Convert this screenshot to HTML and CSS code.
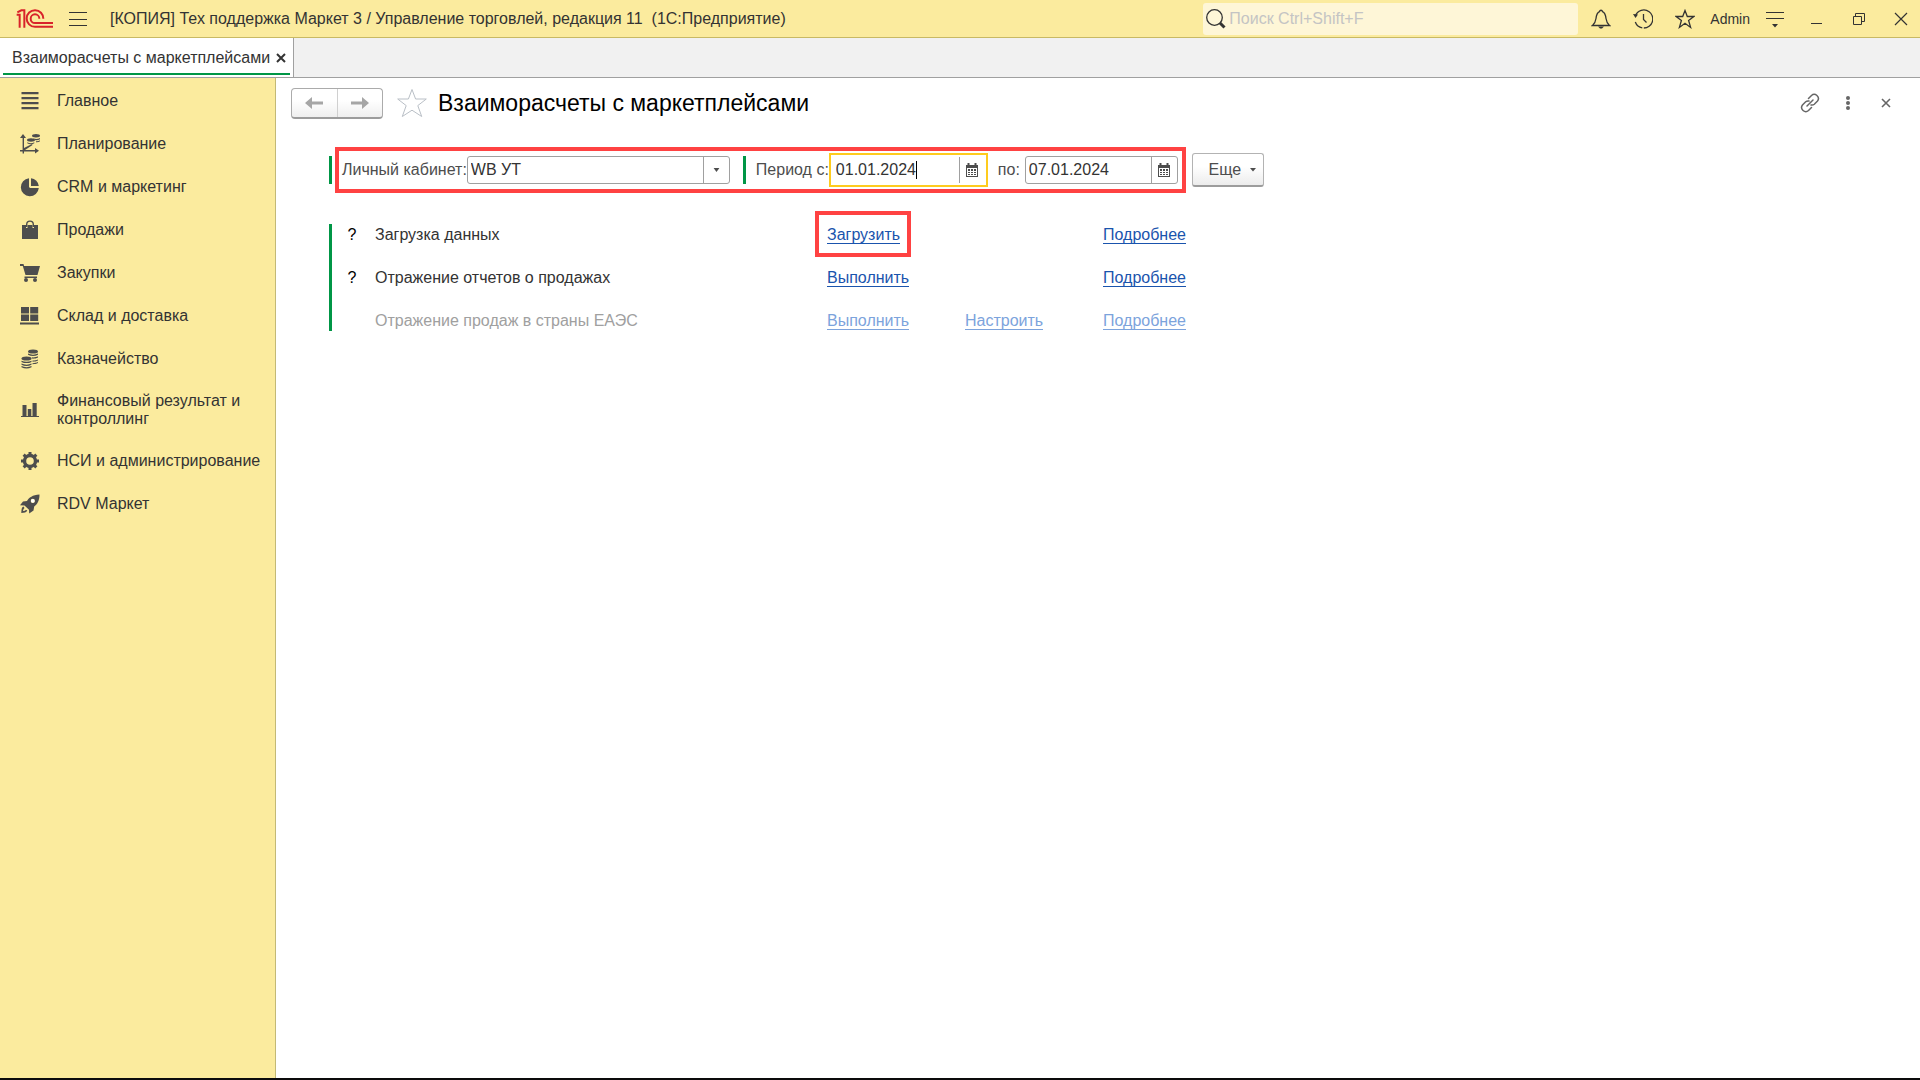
FILE: index.html
```html
<!DOCTYPE html>
<html lang="ru">
<head>
    <meta charset="UTF-8">
    <meta name="viewport" content="width=device-width, initial-scale=1.0">
    <title>Взаиморасчеты с маркетплейсами</title>
    <link rel="stylesheet" href="styles.css">
</head>
<body>

    <header class="titlebar">
        <svg class="logo" viewBox="47 25 111 57" fill="none" stroke="#d8232a" stroke-width="6">
            <path d="M49 42h9v39M51 35l12-6h9v52"/>
            <path d="M129 54a25 25 0 1 0-25 24.500h54M117 54a13 13 0 1 0-13 13h54"/>
        </svg>
        <button class="menu-button" type="button" aria-label="Меню">
            <svg width="18" height="16" viewBox="0 0 18 16" stroke="#333" stroke-width="1"><path d="M0 1.500h18M0 8.500h18M0 14.500h18"/></svg>
        </button>
        <h1 class="app-title">[КОПИЯ] Тех поддержка Маркет 3 / Управление торговлей, редакция 11&nbsp; (1С:Предприятие)</h1>
        <div class="search">
            <svg width="20" height="20" viewBox="0 0 20 20" fill="none" stroke="#333"><circle cx="8.500" cy="8.500" r="7.800" stroke-width="1.300"/><path d="M14 14l4.500 4.500" stroke-width="3"/></svg>
            <input type="text" placeholder="Поиск Ctrl+Shift+F" aria-label="Поиск">
        </div>
        <div class="window-tools">
            <button type="button" aria-label="Уведомления">
                <svg width="20" height="20" viewBox="0 0 20 20" fill="none" stroke="#333" stroke-width="1.300"><path d="M1.500 16.500c2.500-2 3-3.500 3.500-7C5.400 5.500 6.500 3.500 8.500 2.600 8.800.8 11.200.8 11.500 2.600c2 .9 3.100 2.900 3.500 6.900.5 3.500 1 5 3.500 7z"/><path d="M7 17.500h6l-2 2H9z" fill="#333" stroke="none"/></svg>
            </button>
            <button type="button" aria-label="История">
                <svg width="20" height="20" viewBox="0 0 20 20" fill="none" stroke="#333" stroke-width="1.300"><path d="M2.300 7a9 9 0 1 1 0 6" stroke-dasharray="39 1.500"/><path d="M10.500 5v5.500l3 3"/><path d="M0 5l5 .5-2.500 3.500z" fill="#333" stroke="none"/></svg>
            </button>
            <button type="button" aria-label="Избранное">
                <svg width="20" height="20" viewBox="0 0 20 20" fill="none" stroke="#333" stroke-width="1.300"><path d="M10 1.500l2.300 6h6.600l-5.300 4 2 6.900L10 14.300l-5.600 4.100 2-6.900-5.300-4h6.600z"/></svg>
            </button>
            <a class="user" href="#">Admin</a>
            <button type="button" aria-label="Сервис и настройки">
                <svg width="18" height="18" viewBox="0 0 18 18" fill="#333"><path d="M0 2h18v1H0zM0 8h18v1H0zM6 14h6l-3 3.500z"/></svg>
            </button>
            <button type="button" aria-label="Свернуть">
                <svg width="12" height="12" viewBox="0 0 12 12" fill="#333"><path d="M0 10h11v1H0z"/></svg>
            </button>
            <button type="button" aria-label="Восстановить">
                <svg width="12" height="12" viewBox="0 0 12 12" fill="none" stroke="#333"><path d="M.5 3.500h8v8h-8zM2.500 3.500v-3h9v8h-3"/></svg>
            </button>
            <button type="button" aria-label="Закрыть">
                <svg width="14" height="14" viewBox="0 0 14 14" stroke="#333" stroke-width="1.200"><path d="M1 1l12 12M13 1L1 13"/></svg>
            </button>
        </div>
    </header>

    <div class="tabs">
        <div class="tab">
            <span>Взаиморасчеты с маркетплейсами</span>
            <button type="button" aria-label="Закрыть вкладку">
                <svg width="10" height="10" viewBox="0 0 10 10" stroke="#333" stroke-width="2"><path d="M1 1l8 8M9 1L1 9"/></svg>
            </button>
        </div>
    </div>

    <div class="workspace">
        <nav class="sidebar">
            <a href="#">
                <svg viewBox="0 0 20 20"><path d="M1.500 1h17v2.200h-17zM1.500 6h17v2.200h-17zM1.500 11h17v2.200h-17zM1.500 16h17v2.200h-17z"/></svg>
                Главное
            </a>
            <a href="#">
                <svg viewBox="0 0 20 20"><path d="M3 0l3 4H4v10l8-4 .5 1L5 16h10v-2l4 2.700-4 2.800V17.500H4v2H2.600v-2H0V16h2.600V4H0z"/><ellipse cx="11" cy="6" rx="4" ry="1.700"/><ellipse cx="16" cy="1.800" rx="4" ry="1.700"/><path d="M7.300 8.300c2 1.300 5 1.300 7 0v1c-2 1.300-5 1.300-7 0zM13 4.200c2 1 5 1 7-.2v1.200c-1.500 1-3 1.200-4.500 1zM16 7.300c1.500 0 3-.3 4-1v1c-1 .8-2.500 1.200-4 1z"/></svg>
                Планирование
            </a>
            <a href="#">
                <svg viewBox="0 0 20 20"><path d="M9 1.200V10l1 1h8.800A9 9 0 1 1 9 1.200z"/><path d="M11 1.200A8.500 8.500 0 0 1 18.800 9H11z"/></svg>
                CRM и маркетинг
            </a>
            <a href="#">
                <svg viewBox="0 0 20 20"><path d="M2 5h4v3h1.500V5h5v3H14V5h4v14H2z"/><path d="M6.700 7V4.500C6.700 0 13.300 0 13.300 4.500V7" fill="none" stroke="#4d4d4d" stroke-width="1.400"/></svg>
                Продажи
            </a>
            <a href="#">
                <svg viewBox="0 0 20 20"><path d="M0 1h3.500l.6 2H20l-2.500 9H5.500L2.800 3H0zM4.500 13.500H17V15H4.500z"/><circle cx="6" cy="17" r="2"/><circle cx="15" cy="17" r="2"/></svg>
                Закупки
            </a>
            <a href="#">
                <svg viewBox="0 0 20 20"><path d="M1 1h8v6.500H1zM10.200 1h8v6.500h-8zM1 8.500h8V15H1zM10.200 8.500h8V15h-8zM0 16.500h19v2H0z"/></svg>
                Склад и доставка
            </a>
            <a href="#">
                <svg viewBox="0 0 20 20"><ellipse cx="13" cy="2.500" rx="5" ry="2"/><ellipse cx="6.500" cy="9.500" rx="5" ry="2"/><path d="M8 4.600c3 1.500 7 1.500 10 0v1.200c-3 1.600-7 1.600-10 0zM11.500 8.300c2.500.3 5-.2 6.500-1v1.200c-1.500.8-3 1.200-5.500 1.200zM12.500 11.500c2.300 0 4-.3 5.500-1.100v1.200c-1.500.8-3.200 1.200-5.500 1.200zM12.500 14.200c2.300 0 4-.3 5.500-1.100v.9c-1.500.8-3.200 1.200-5.500 1.200zM1.500 11.700c3 1.500 7 1.500 10 0v1.200c-3 1.600-7 1.600-10 0zM1.500 14.500c3 1.500 7 1.500 10 0v1.200c-3 1.600-7 1.600-10 0zM1.500 17c3 1.500 7 1.500 10 0v1.200c-3 1.600-7 1.600-10 0z"/></svg>
                Казначейство
            </a>
            <a href="#">
                <svg viewBox="0 0 20 20"><path d="M2.500 5h4v11h1.300V9h3.500v7h1.200V3h4.200v13H19v1H1v-1h1.500z"/></svg>
                Финансовый результат и контроллинг
            </a>
            <a href="#">
                <svg viewBox="0 0 20 20"><circle cx="10" cy="10" r="5.500" fill="none" stroke="#4d4d4d" stroke-width="3.400"/><path d="M8.500 1h3v3h-3zM8.500 16h3v3h-3zM1 8.500h3v3H1zM16 8.500h3v3h-3zM2.600 4.700l2.100-2.100 2 2-2.100 2.100zM13.300 15.400l2.100-2.100 2 2-2.100 2.100zM15.300 2.600l2.100 2.100-2 2-2.100-2.100zM4.600 13.300l2.100 2.100-2 2-2.100-2.100z"/></svg>
                НСИ и администрирование
            </a>
            <a href="#">
                <svg viewBox="0 0 20 20"><path fill-rule="evenodd" d="M19.500.5c-7 .5-10.500 3-12.500 6.500L3 7.500 0 11.300l4.500.2 4.500 4.300.2 3.700 4.300-3 .7-4c3.300-2.500 5.300-6 5.300-12zM12.800 4.800a2.100 2.100 0 1 1 0 4.200 2.100 2.100 0 0 1 0-4.200z"/><circle cx="12.800" cy="6.900" r="1.800" fill="#fff"/><path d="M3.500 12.500C1.500 13.500 1.500 15.500 1.300 19c3-.2 5-.5 6-2.500l-1.500-.7c-.6 1-1.500 1.300-2.700 1.300.1-1.300.4-2.400 1.400-3.200z"/></svg>
                RDV Маркет
            </a>
        </nav>

        <main class="content">
            <div class="page-head">
                <div class="nav-buttons">
                    <button type="button" aria-label="Назад">
                        <svg width="18" height="12" viewBox="0 0 18 12" fill="#a6a6a6"><path d="M0 6l7-6v4.500h11v3H7V12z"/></svg>
                    </button>
                    <button type="button" aria-label="Вперед">
                        <svg width="18" height="12" viewBox="0 0 18 12" fill="#a6a6a6"><path d="M18 6l-7-6v4.500H0v3h11V12z"/></svg>
                    </button>
                </div>
                <button class="favorite" type="button" aria-label="Добавить в избранное">
                    <svg width="30" height="30" viewBox="0 0 30 30" fill="none" stroke="#b9bfc6" stroke-width="1"><path d="M15 1.500l3.600 9.500h10.700l-8.500 6.600 3.900 10.900L15 22.200l-9.700 6.300 3.900-10.900L.7 11h10.700z"/></svg>
                </button>
                <h2>Взаиморасчеты с маркетплейсами</h2>
                <div class="page-tools">
                    <button type="button" aria-label="Получить ссылку">
                        <svg width="20" height="20" viewBox="0 0 20 20" fill="none" stroke="#666" stroke-width="1.500" stroke-linecap="round"><path d="M8.500 5.500l3-3c3.500-3.200 9 1.500 6 5.500l-3.200 3.200c-1 .9-2.300 1-3.300.8M11.500 14.500l-3 3c-3.500 3.200-9-1.500-6-5.500l3.200-3.200c1-.9 2.300-1 3.300-.8M7 13l6-6"/></svg>
                    </button>
                    <button type="button" aria-label="Еще действия">
                        <svg width="4" height="14" viewBox="0 0 4 14" fill="#666"><circle cx="2" cy="2" r="2"/><circle cx="2" cy="7" r="2"/><circle cx="2" cy="12" r="2"/></svg>
                    </button>
                    <button type="button" aria-label="Закрыть">
                        <svg width="10" height="10" viewBox="0 0 10 10" stroke="#666" stroke-width="1.600"><path d="M1 1l8 8M9 1L1 9"/></svg>
                    </button>
                </div>
            </div>

            <form class="filters">
                <div class="filter-box">
                    <label for="account">Личный кабинет:</label>
                    <div class="field field-account">
                        <select id="account">
                            <option>WB УТ</option>
                        </select>
                        <svg class="arrow" viewBox="0 0 26 26" fill="#4d4d4d"><path d="M10 11h6l-3 4z"/></svg>
                    </div>
                    <label class="group-start" for="dateFrom">Период с:</label>
                    <div class="field field-date active">
                        <input type="text" id="dateFrom" value="01.01.2024">
                        <span class="caret"></span>
                        <button type="button" aria-label="Выбрать дату начала">
                            <svg width="12" height="14" viewBox="0 0 12 14"><path fill="#4d4d4d" fill-rule="evenodd" d="M0 2h1.500V0h2v2h5V0h2v2H12v12H0zM1 5v8h10V5z"/><path fill="#4d4d4d" d="M2 6h2v2H2zM5 6h2v2H5zM8 6h2v2H8zM2 9h2v1H2zM5 9h2v1H5zM8 9h2v1H8zM2 11h2v1H2zM5 11h2v1H5zM8 11h2v1H8z"/></svg>
                        </button>
                    </div>
                    <label class="to-label" for="dateTo">по:</label>
                    <div class="field field-date">
                        <input type="text" id="dateTo" value="07.01.2024">
                        <button type="button" aria-label="Выбрать дату окончания">
                            <svg width="12" height="14" viewBox="0 0 12 14"><path fill="#4d4d4d" fill-rule="evenodd" d="M0 2h1.500V0h2v2h5V0h2v2H12v12H0zM1 5v8h10V5z"/><path fill="#4d4d4d" d="M2 6h2v2H2zM5 6h2v2H5zM8 6h2v2H8zM2 9h2v1H2zM5 9h2v1H5zM8 9h2v1H8zM2 11h2v1H2zM5 11h2v1H5zM8 11h2v1H8z"/></svg>
                        </button>
                    </div>
                </div>
                <button class="more" type="button">
                    Еще
                    <svg width="6" height="4" viewBox="0 0 6 4" fill="#4d4d4d"><path d="M0 0h6L3 3.500z"/></svg>
                </button>
            </form>

            <div class="tasks">
                <div class="task">
                    <button class="help" type="button">?</button>
                    <span>Загрузка данных</span>
                    <a class="run marked" href="#">Загрузить</a>
                    <a class="details" href="#">Подробнее</a>
                </div>
                <div class="task">
                    <button class="help" type="button">?</button>
                    <span>Отражение отчетов о продажах</span>
                    <a class="run" href="#">Выполнить</a>
                    <a class="details" href="#">Подробнее</a>
                </div>
                <div class="task disabled">
                    <span>Отражение продаж в страны ЕАЭС</span>
                    <a class="run" href="#">Выполнить</a>
                    <a class="setup" href="#">Настроить</a>
                    <a class="details" href="#">Подробнее</a>
                </div>
            </div>
        </main>
    </div>

    <footer class="taskbar"></footer>

</body>
</html>
```
FILE: styles.css
```css
* {
    box-sizing: border-box;
}
body {
    margin: 0;
    min-height: 100vh;
    display: flex;
    flex-direction: column;
    font-family: "Liberation Sans", Arial, sans-serif;
    font-size: 16px;
    line-height: 18px;
    color: #333;
    background: white;
}
button, input, select {
    font: inherit;
    color: inherit;
    margin: 0;
    padding: 0;
    border: none;
    background: none;
    outline: none;
}
button {
    display: flex;
    align-items: center;
    justify-content: center;
    cursor: pointer;
}
svg {
    display: block;
    flex: none;
}

/* Title bar */
.titlebar {
    display: flex;
    align-items: center;
    height: 38px;
    padding-left: 16px;
    background: #fbeb9e;
    border-bottom: 1px solid #c8b964;
}
.logo {
    width: 37px;
    height: 19px;
}
.menu-button {
    width: 50px;
    height: 36px;
}
.app-title {
    flex: 1;
    margin: 0;
    padding-left: 7px;
    font-size: 16px;
    font-weight: normal;
    white-space: nowrap;
}
.search {
    display: flex;
    align-items: center;
    gap: 3px;
    width: 375px;
    height: 32px;
    padding-left: 3px;
    background: #fef6d7;
    border-radius: 3px;
}
.search input {
    flex: 1;
    min-width: 0;
}
.search input::placeholder {
    color: #c4c4c4;
    opacity: 1;
}
.window-tools {
    display: flex;
    align-items: center;
    gap: 4px;
    margin-left: 4px;
}
.window-tools button {
    width: 38px;
    height: 36px;
}
.user {
    padding: 0 2px;
    font-size: 14px;
    color: #333;
    text-decoration: none;
}

/* Open tabs */
.tabs {
    display: flex;
    height: 40px;
    background: #f1f1f1;
    border-bottom: 1px solid #a0a0a0;
}
.tab {
    position: relative;
    display: flex;
    align-items: center;
    gap: 6px;
    padding: 0 7px 0 12px;
    background: white;
    border-right: 1px solid #a0a0a0;
}
.tab::after {
    content: "";
    position: absolute;
    left: 3px;
    right: 3px;
    bottom: 2px;
    height: 2px;
    background: #009646;
}

/* Sections panel */
.workspace {
    flex: 1;
    display: flex;
}
.sidebar {
    width: 276px;
    flex: none;
    padding-top: 1px;
    background: #fbeb9e;
    border-right: 1px solid #c3b976;
}
.sidebar a {
    display: flex;
    align-items: center;
    gap: 17px;
    min-height: 43px;
    padding: 12px 8px 11px 20px;
    color: #333;
    text-decoration: none;
}
.sidebar svg {
    width: 20px;
    height: 20px;
    margin: -1px 0;
    fill: #4d4d4d;
}

/* Page */
.content {
    flex: 1;
}
.page-head {
    display: flex;
    align-items: center;
    height: 50px;
    padding: 0 15px;
}
.nav-buttons {
    display: flex;
    width: 92px;
    height: 31px;
    border: 1px solid #ababab;
    border-bottom: 2px solid #9c9c9c;
    border-radius: 4px;
    background: linear-gradient(#fff 40%, #efefef);
}
.nav-buttons button {
    flex: 1;
}
.nav-buttons button + button {
    border-left: 1px solid #d0d0d0;
}
.favorite {
    margin: 0 11px 0 14px;
}
h2 {
    flex: 1;
    margin: 0;
    font-size: 23px;
    line-height: 28px;
    font-weight: normal;
    color: #000;
}
.page-tools {
    display: flex;
}
.page-tools button {
    width: 38px;
    height: 30px;
}

/* Filters */
.filters {
    display: flex;
    align-items: center;
    gap: 6px;
    margin: 19px 0 0 53px;
}
.filters::before {
    content: "";
    width: 3px;
    height: 28px;
    margin-right: -3px;
    background: #009646;
}
.filter-box {
    display: flex;
    align-items: center;
    height: 46px;
    padding: 0 4px 0 3px;
    border: 4px solid #ff4242;
}
.filter-box label {
    color: #4d4d4d;
    white-space: nowrap;
}
.field {
    position: relative;
    display: flex;
    height: 28px;
    border: 1px solid #a0a0a0;
    border-radius: 3px;
    background: white;
}
.field-account {
    width: 263px;
}
.field select {
    flex: 1;
    padding: 0 30px 0 3px;
    appearance: none;
}
.field .arrow {
    position: absolute;
    right: 0;
    width: 26px;
    height: 26px;
    border-left: 1px solid #a0a0a0;
    pointer-events: none;
}
.filter-box .group-start {
    display: flex;
    align-items: center;
    gap: 10px;
    margin-left: 13px;
}
.group-start::before {
    content: "";
    width: 3px;
    height: 28px;
    background: #009646;
}
.field-date {
    width: 153px;
    margin-left: 5px;
}
.field input {
    flex: 1;
    min-width: 0;
    padding-left: 3px;
}
.field button {
    width: 26px;
    border-left: 1px solid #a0a0a0;
}
.field-date.active {
    width: 159px;
    height: 34px;
    margin-left: 0;
    padding: 2px 1px;
    border: 2px solid #fecb1e;
    border-radius: 0;
}
.active input {
    padding-left: 4px;
}
.caret {
    position: absolute;
    left: 85px;
    top: 6px;
    width: 1px;
    height: 18px;
    background: #000;
}
.to-label {
    margin-left: 10px;
}
.more {
    gap: 9px;
    width: 72px;
    height: 34px;
    padding-left: 9px;
    border: 1px solid #b3b3b3;
    border-bottom: 2px solid #9c9c9c;
    border-radius: 3px;
    background: linear-gradient(#fff 40%, #ececec);
    color: #4d4d4d;
}

/* Tasks */
.tasks {
    display: grid;
    gap: 23px;
    margin: 31px 0 0 53px;
    padding: 1px 0 0 12px;
    border-left: 3px solid #009646;
}
.task {
    display: grid;
    grid-template-columns: 31px 452px 138px 138px 100px;
    height: 20px;
    align-items: center;
    justify-items: start;
}
.task > * {
    grid-row: 1;
}
.help {
    width: 16px;
    color: #000;
}
.task span {
    grid-column: 2;
}
.run {
    grid-column: 3;
}
.setup {
    grid-column: 4;
}
.details {
    grid-column: 5;
}
.task a {
    position: relative;
    line-height: 17px;
    color: #1a54ad;
    text-decoration: none;
    border-bottom: 1px solid #1a54ad;
}
.task .marked::after {
    content: "";
    position: absolute;
    inset: -15px -11px -14px -12px;
    border: 4px solid #ff4242;
}
.task.disabled span {
    color: #a0a0a0;
}
.task.disabled a {
    color: #7ca3dc;
    border-color: #7ca3dc;
}

.taskbar {
    height: 2px;
    background: #0c0b0c;
}
```
